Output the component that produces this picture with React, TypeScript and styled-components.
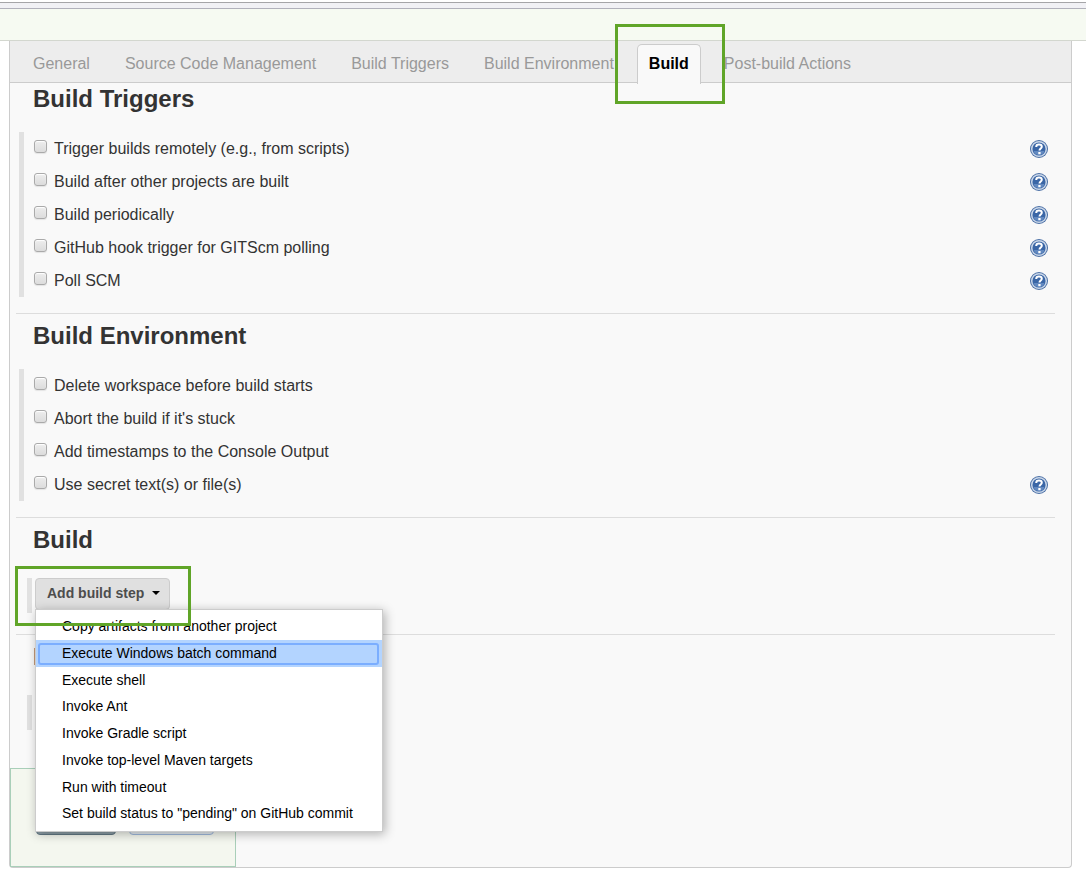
import React from "react";
import styled, { createGlobalStyle } from "styled-components";

const GlobalStyle = createGlobalStyle`
  * { box-sizing: border-box; }
  body {
    margin: 0;
    background: #fff;
    color: #333;
    font-family: "Liberation Sans", Arial, Helvetica, sans-serif;
    font-size: 16px;
  }
`;

const TopEdge = styled.div`
  height: 9px;
  border-bottom: 1px solid #b1b1bb;
  background: linear-gradient(#fff 2px, #a5a5a8 2px, #a5a5a8 3px, #f1f1f5 3px);
`;

const Breadcrumbs = styled.div`
  height: 32px;
  background: #f6faf2;
  border-bottom: 1px solid #d3d7cf;
`;

const Panel = styled.main`
  margin: 0 14px 18px 9px;
  background: #f9f9f9;
  border: 1px solid #ccc;
  border-top: 0;
  border-radius: 0 0 4px 4px;
`;

const TabBar = styled.nav`
  display: flex;
  align-items: flex-end;
  gap: 11px;
  height: 42px;
  padding: 0 11px;
  background: #ededed;
  border-bottom: 1px solid #ccc;
`;

const TabSlot = styled.div`
  position: relative;
  margin-bottom: -2px;
`;

const Tab = styled.a<{ $active?: boolean }>`
  display: block;
  height: 40px;
  padding: 0 11px;
  line-height: 38px;
  white-space: nowrap;
  text-decoration: none;
  border: 1px solid transparent;
  border-bottom: 0;
  border-radius: 5px 5px 0 0;
  color: ${(p) => (p.$active ? "#000" : "#999")};
  font-weight: ${(p) => (p.$active ? "bold" : "normal")};
  background: ${(p) => (p.$active ? "#f9f9f9" : "transparent")};
  border-color: ${(p) => (p.$active ? "#ccc" : "transparent")};
`;

const Highlight = styled.span<{ $inset: string }>`
  position: absolute;
  inset: ${(p) => p.$inset};
  z-index: 3;
  border: 3px solid #60a528;
  pointer-events: none;
`;

const Content = styled.div`
  padding: 2px 16px 38px 6px;
`;

const Heading = styled.h2`
  margin: 0 0 0 17px;
  font-size: 24px;
  line-height: 28px;
  color: #333;
`;

const Divider = styled.hr`
  height: 1px;
  margin: 0 0 8px;
  border: 0;
  background: #ddd;
`;

const Options = styled.div`
  margin: 19px 0 16px 3px;
  border-left: 5px solid #e1e1e1;
`;

const OptionRow = styled.div`
  display: flex;
  align-items: center;
  justify-content: space-between;
  height: 33px;
  padding: 0 7px 0 10px;
`;

const OptionLabel = styled.label`
  display: flex;
  gap: 7px;
  line-height: 32px;
`;

const Checkbox = styled.input`
  appearance: none;
  width: 13px;
  height: 13px;
  margin: 7px 0 0;
  border: 1px solid #aaa;
  border-radius: 3px;
  background: linear-gradient(#ededed, #dcdcdc);
  box-shadow: inset 0 1px 1px #fff, 0 1px 1px #e4e4e4;
`;

const HelpButton = styled.button`
  display: flex;
  padding: 0;
  border: 0;
  background: none;
`;

const StepArea = styled.div`
  position: relative;
  width: fit-content;
  height: 35px;
  margin: 24px 0 21px 11px;
  padding-left: 3px;
  border-left: 5px solid #e1e1e1;
`;

const StepButton = styled.button`
  display: flex;
  align-items: center;
  gap: 8px;
  height: 32px;
  padding: 0 9px 2px 11px;
  border: 1px solid #ccc;
  border-radius: 4px;
  background: #e0e0e0;
  color: #4d4d4d;
  font-family: inherit;
  font-size: 14px;
  font-weight: bold;
  white-space: nowrap;
`;

const Menu = styled.ul`
  position: absolute;
  top: 31px;
  left: 3px;
  z-index: 2;
  display: flex;
  flex-direction: column;
  width: 348px;
  height: 223px;
  margin: 0;
  padding: 3px 0 4px;
  list-style: none;
  background: #fff;
  border: 1px solid #ccc;
  box-shadow: 2px 2px 10px rgba(0, 0, 0, 0.3);
`;

const MenuItem = styled.li<{ $selected?: boolean }>`
  display: flex;
  flex: 1;
  padding: 3px 3px 2px 2px;
  background: ${(p) => (p.$selected ? "#b3d4ff" : "transparent")};
`;

const MenuLink = styled.a<{ $selected?: boolean }>`
  flex: 1;
  padding-left: 22px;
  line-height: 17px;
  font-size: 14px;
  color: #000;
  text-decoration: none;
  border: 2px solid ${(p) => (p.$selected ? "#7baeff" : "transparent")};
  border-radius: 3px;
`;

const CoveredHeading = styled.div`
  width: 1px;
  height: 17px;
  margin: 13px 0 30px 18px;
  background: #c49a7a;
`;

const CoveredStep = styled.div`
  width: 5px;
  height: 35px;
  margin-left: 11px;
  background: #e1e1e1;
`;

const SaveBar = styled.div`
  display: flex;
  gap: 13px;
  width: 226px;
  height: 99px;
  padding: 36px 20px 0 25px;
  background: #f4f7ef;
  border: 1px solid #a9cfb9;
`;

const SaveButton = styled.button<{ $primary?: boolean }>`
  width: ${(p) => (p.$primary ? 80 : 85)}px;
  height: 30px;
  padding: 0;
  border: 1px solid ${(p) => (p.$primary ? "#627884" : "#9fb9dc")};
  border-radius: 4px;
  background: ${(p) => (p.$primary ? "#8b9ca5" : "#e3eaf0")};
`;

const HelpIcon = () => (
  <svg width="18" height="18" viewBox="0 0 18 18" aria-hidden="true">
    <circle cx="9" cy="9" r="9" fill="#4a6fa5" />
    <circle cx="9" cy="9" r="7.3" fill="#3a66a6" stroke="#c9d6e8" strokeWidth="1.5" />
    <path d="M3.5 11a5.8 5.8 0 0 0 11 0z" fill="#6289c0" />
    <path
      d="M6.2 6.9C6.2 5.2 7.3 4.5 9 4.5s2.8.8 2.8 2.3c0 1.8-2.3 1.8-2.3 3.8"
      fill="none"
      stroke="#fff"
      strokeWidth="2"
    />
    <rect x="8.3" y="12" width="2.3" height="2.2" fill="#fff" />
  </svg>
);

const Option = ({ label, help }: { label: string; help?: boolean }) => (
  <OptionRow>
    <OptionLabel>
      <Checkbox type="checkbox" />
      {label}
    </OptionLabel>
    {help && (
      <HelpButton type="button" aria-label={`Help for ${label}`}>
        <HelpIcon />
      </HelpButton>
    )}
  </OptionRow>
);

const tabs = [
  "General",
  "Source Code Management",
  "Build Triggers",
  "Build Environment",
  "Build",
  "Post-build Actions",
];

const triggers = [
  "Trigger builds remotely (e.g., from scripts)",
  "Build after other projects are built",
  "Build periodically",
  "GitHub hook trigger for GITScm polling",
  "Poll SCM",
];

const environment = [
  { label: "Delete workspace before build starts" },
  { label: "Abort the build if it's stuck" },
  { label: "Add timestamps to the Console Output" },
  { label: "Use secret text(s) or file(s)", help: true },
];

const steps = [
  "Copy artifacts from another project",
  "Execute Windows batch command",
  "Execute shell",
  "Invoke Ant",
  "Invoke Gradle script",
  "Invoke top-level Maven targets",
  "Run with timeout",
  'Set build status to "pending" on GitHub commit',
];

export default function App() {
  return (
    <>
      <GlobalStyle />
      <TopEdge />
      <Breadcrumbs />
      <Panel>
        <TabBar>
          {tabs.map((name) => (
            <TabSlot key={name}>
              <Tab href="#" $active={name === "Build"}>
                {name}
              </Tab>
              {name === "Build" && <Highlight $inset="-20px -24px -20px -22px" />}
            </TabSlot>
          ))}
        </TabBar>
        <Content>
          <Heading>Build Triggers</Heading>
          <Options>
            {triggers.map((label) => (
              <Option key={label} label={label} help />
            ))}
          </Options>
          <Divider />
          <Heading>Build Environment</Heading>
          <Options>
            {environment.map((o) => (
              <Option key={o.label} {...o} />
            ))}
          </Options>
          <Divider />
          <Heading>Build</Heading>
          <StepArea>
            <StepButton type="button" aria-haspopup="menu" aria-expanded="true">
              Add build step
              <svg width="8" height="4" viewBox="0 0 8 4" aria-hidden="true">
                <path d="M0 0h8L4 4z" fill="#000" />
              </svg>
            </StepButton>
            <Menu>
              {steps.map((name, i) => (
                <MenuItem key={name} $selected={i === 1}>
                  <MenuLink href="#" $selected={i === 1}>
                    {name}
                  </MenuLink>
                </MenuItem>
              ))}
            </Menu>
            <Highlight $inset="-12px -21px -13px -17px" />
          </StepArea>
          <Divider />
          <CoveredHeading />
          <CoveredStep />
        </Content>
        <SaveBar>
          <SaveButton type="button" $primary aria-label="Save" />
          <SaveButton type="button" aria-label="Apply" />
        </SaveBar>
      </Panel>
    </>
  );
}
